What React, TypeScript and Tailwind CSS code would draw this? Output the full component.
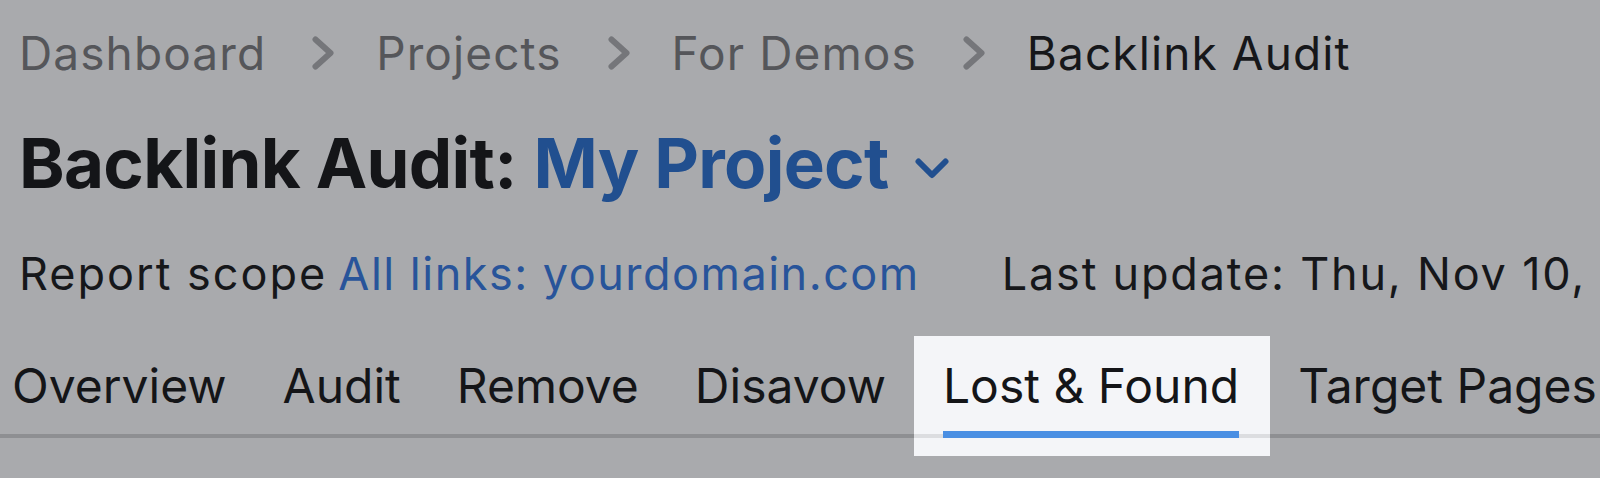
import React from "react";

const crumbs = ["Dashboard", "Projects", "For Demos"];
const tabs = ["Overview", "Audit", "Remove", "Disavow", "Lost & Found", "Target Pages"];

const Chevron = () => (
  <svg width="22" height="34" viewBox="0 0 22 34" className="ml-[46px] mr-[42px] shrink-0">
    <path
      d="M3.5 3.5 L18.5 17 L3.5 30.5"
      fill="none"
      stroke="#75767a"
      strokeWidth="6"
      strokeLinecap="round"
      strokeLinejoin="round"
    />
  </svg>
);

export default function App() {
  return (
    <div className="h-[478px] w-[1600px] overflow-hidden bg-[#a9aaad] [font-family:Inter,sans-serif]">
      <div className="pl-[19px]">
        {/* breadcrumbs */}
        <nav className="flex items-center pt-[30px] text-[46px] leading-[46px] tracking-[1.1px] whitespace-nowrap">
          {crumbs.map((c) => (
            <React.Fragment key={c}>
              <span className="text-[#55565a]">{c}</span>
              <Chevron />
            </React.Fragment>
          ))}
          <span className="text-[#16171a]">Backlink Audit</span>
        </nav>

        {/* title */}
        <h1 className="mt-[53px] flex items-center text-[69px] leading-[69px] font-bold tracking-[-0.7px] whitespace-nowrap">
          <span className="text-[#141518]">Backlink Audit:</span>
          <span className="ml-[17px] text-[#214f8f]">My Project</span>
          <svg width="34" height="21" viewBox="0 0 34 21" className="ml-[26px] mt-[9px]">
            <path
              d="M3.5 3.5 L17 17 L30.5 3.5"
              fill="none"
              stroke="#214f8f"
              strokeWidth="6"
              strokeLinecap="round"
              strokeLinejoin="round"
            />
          </svg>
        </h1>

        {/* report scope */}
        <div className="mt-[53px] flex text-[45px] leading-[45px] tracking-[1.5px] whitespace-nowrap">
          <span className="tracking-[2px] text-[#16171a]">Report scope</span>
          <span className="ml-[11px] text-[#28549a]">All links: yourdomain.com</span>
          <span className="ml-[82px] tracking-[1.8px] text-[#16171a]">Last update: Thu, Nov 10,</span>
        </div>
      </div>

      {/* tabs */}
      <div className="mt-[40px] -ml-[16px] flex border-b-4 border-[#8e8f92] text-[48px] leading-[48px] text-[#141518] whitespace-nowrap">
        {tabs.map((t) => {
          const active = t === "Lost & Found";
          return (
            <div
              key={t}
              className={`relative pt-[26px] pb-[24px] ${active ? "pl-[29px] pr-[31px]" : "px-[28px]"}`}
            >
              {active && (
                <div className="absolute inset-x-0 top-0 -bottom-[22px] bg-[#f4f5f8]">
                  <div className="absolute inset-x-0 bottom-[18px] h-[4px] bg-[#dcdde0]" />
                </div>
              )}
              <span className="relative">{t}</span>
              {active && (
                <div className="absolute left-[29px] right-[31px] -bottom-[4px] h-[7px] bg-[#4a8fe3]" />
              )}
            </div>
          );
        })}
      </div>
    </div>
  );
}
